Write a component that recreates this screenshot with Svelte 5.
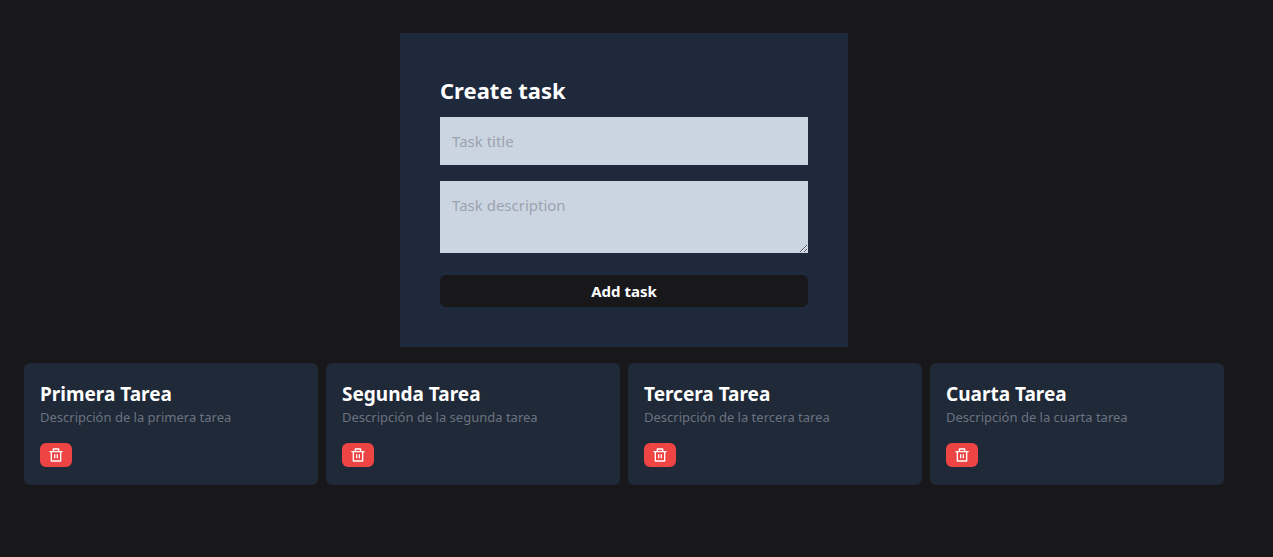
<script>
  let title = $state('');
  let description = $state('');
  let tasks = $state([
    { id: 0, title: 'Primera Tarea', description: 'Descripción de la primera tarea' },
    { id: 1, title: 'Segunda Tarea', description: 'Descripción de la segunda tarea' },
    { id: 2, title: 'Tercera Tarea', description: 'Descripción de la tercera tarea' },
    { id: 3, title: 'Cuarta Tarea', description: 'Descripción de la cuarta tarea' }
  ]);
  let nextId = 4;

  function addTask(event) {
    event.preventDefault();
    tasks.push({ id: nextId++, title, description });
    title = '';
    description = '';
  }

  function removeTask(id) {
    tasks = tasks.filter((task) => task.id !== id);
  }
</script>

<main>
  <form onsubmit={addTask}>
    <h1>Create task</h1>
    <input type="text" placeholder="Task title" aria-label="Task title" bind:value={title} />
    <textarea placeholder="Task description" aria-label="Task description" rows="2" bind:value={description}></textarea>
    <button class="add" type="submit">Add task</button>
  </form>

  <section class="tasks">
    {#each tasks as task (task.id)}
      <article>
        <h2>{task.title}</h2>
        <p>{task.description}</p>
        <button class="remove" type="button" aria-label="Delete" onclick={() => removeTask(task.id)}>
          <svg viewBox="0 0 24 24" width="16" height="16" fill="currentColor" aria-hidden="true">
            <path d="M17 6H22V8H20V21C20 21.5523 19.5523 22 19 22H5C4.44772 22 4 21.5523 4 21V8H2V6H7V3C7 2.44772 7.44772 2 8 2H16C16.5523 2 17 2.44772 17 3V6ZM18 8H6V20H18V8ZM9 11H11V17H9V11ZM13 11H15V17H13V11ZM9 4V6H15V4H9Z" />
          </svg>
        </button>
      </article>
    {/each}
  </section>
</main>

<style>
  :global(body) {
    margin: 0;
    background: #18181a;
  }

  main, main * {
    box-sizing: border-box;
  }

  main {
    padding: 33px 49px 16px 24px;
    font-family: "Noto Sans", "Open Sans", sans-serif;
    font-size: 15px;
    line-height: 24px;
    color: #fff;
  }

  h1, h2, p {
    margin: 0;
  }

  form {
    display: flex;
    flex-direction: column;
    max-width: 448px;
    margin: 0 auto 16px;
    padding: 40px;
    background: #1e293b;
  }

  h1 {
    margin-bottom: 10px;
    font-size: 22px;
    line-height: 34px;
    font-weight: 700;
  }

  input, textarea {
    display: block;
    width: 100%;
    padding: 12px;
    border: 0;
    border-radius: 0;
    background: #cbd5e1;
    color: #18181a;
    font: inherit;
  }

  input {
    height: 48px;
    margin-bottom: 16px;
  }

  textarea {
    height: 72px;
    margin-bottom: 22px;
  }

  ::placeholder {
    color: #9ca3af;
    opacity: 1;
  }

  button {
    border: 0;
    border-radius: 6px;
    color: #fff;
    font: inherit;
    cursor: pointer;
  }

  .add {
    padding: 4px 12px;
    background: #18181a;
    font-weight: 700;
  }

  .tasks {
    display: grid;
    grid-template-columns: repeat(auto-fit, minmax(240px, 1fr));
    gap: 8px;
  }

  article {
    padding: 16px 16px 18px;
    border-radius: 6px;
    background: #1f2937;
  }

  h2 {
    font-size: 19px;
    line-height: 30px;
    font-weight: 700;
  }

  p {
    color: #6b7280;
    font-size: 13px;
    line-height: 16px;
  }

  .remove {
    display: flex;
    margin-top: 18px;
    padding: 4px 8px;
    background: #ef4444;
  }

  svg {
    display: block;
  }
</style>
